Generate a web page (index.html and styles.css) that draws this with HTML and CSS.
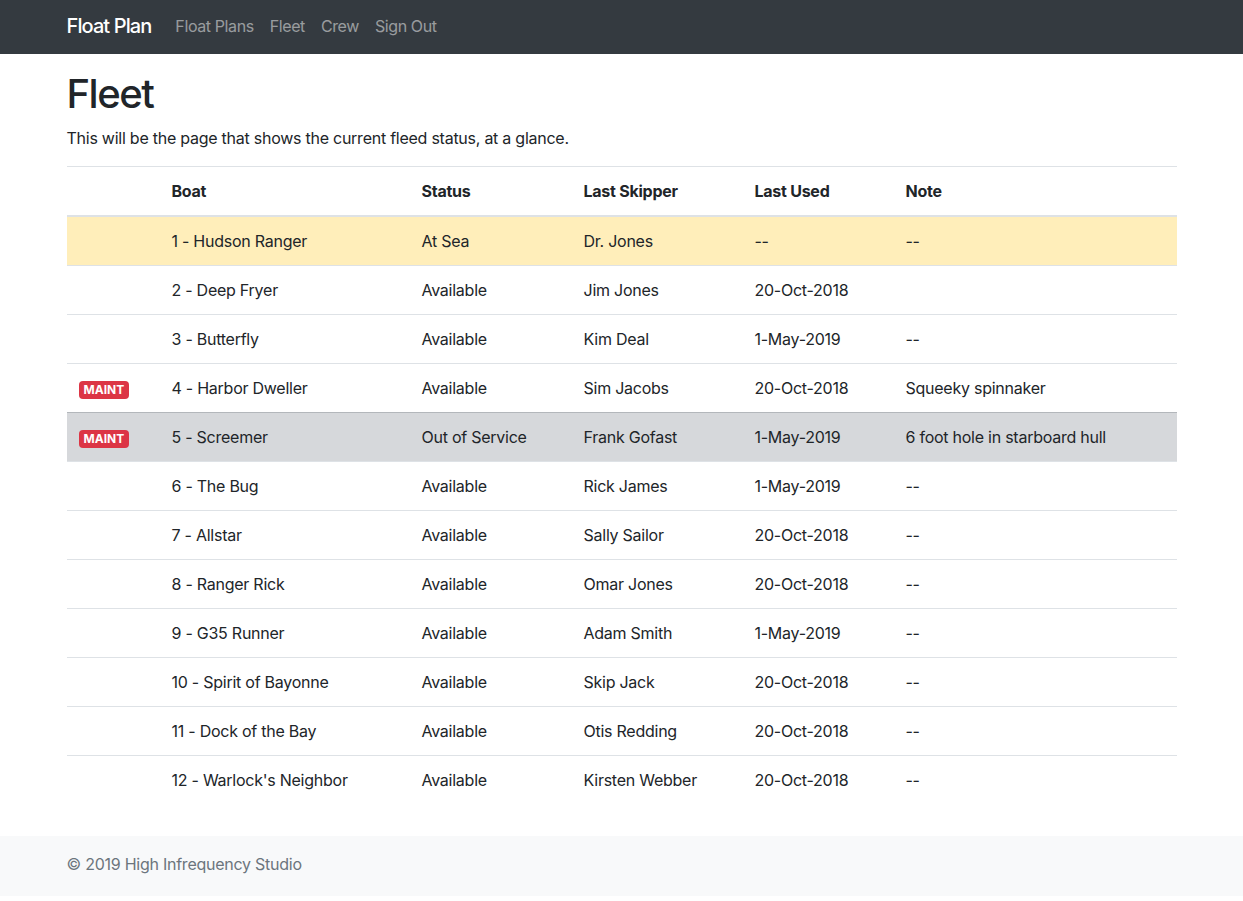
FILE: index.html
```html
<!DOCTYPE html>
<html lang="en">
<head>
<meta charset="utf-8">
<title>Float Plan - Fleet</title>
<link rel="stylesheet" href="styles.css">
</head>
<body>
<nav class="navbar">
  <div class="container nav-inner">
    <a class="brand" href="#">Float Plan</a>
    <ul class="nav-links">
      <li><a href="#">Float Plans</a></li>
      <li><a href="#">Fleet</a></li>
      <li><a href="#">Crew</a></li>
      <li><a href="#">Sign Out</a></li>
    </ul>
  </div>
</nav>
<main class="container main">
  <h1>Fleet</h1>
  <p class="lead-text">This will be the page that shows the current fleed status, at a glance.</p>
  <table class="fleet">
    <colgroup>
      <col class="c-badge"><col class="c-boat"><col class="c-status"><col class="c-skipper"><col class="c-used"><col class="c-note">
    </colgroup>
    <thead>
      <tr><th></th><th>Boat</th><th>Status</th><th>Last Skipper</th><th>Last Used</th><th>Note</th></tr>
    </thead>
    <tbody>
      <tr class="row-warning"><td></td><td>1 - Hudson Ranger</td><td>At Sea</td><td>Dr. Jones</td><td>--</td><td>--</td></tr>
      <tr><td></td><td>2 - Deep Fryer</td><td>Available</td><td>Jim Jones</td><td>20-Oct-2018</td><td></td></tr>
      <tr><td></td><td>3 - Butterfly</td><td>Available</td><td>Kim Deal</td><td>1-May-2019</td><td>--</td></tr>
      <tr><td><span class="badge">MAINT</span></td><td>4 - Harbor Dweller</td><td>Available</td><td>Sim Jacobs</td><td>20-Oct-2018</td><td>Squeeky spinnaker</td></tr>
      <tr class="row-secondary"><td><span class="badge">MAINT</span></td><td>5 - Screemer</td><td>Out of Service</td><td>Frank Gofast</td><td>1-May-2019</td><td>6 foot hole in starboard hull</td></tr>
      <tr><td></td><td>6 - The Bug</td><td>Available</td><td>Rick James</td><td>1-May-2019</td><td>--</td></tr>
      <tr><td></td><td>7 - Allstar</td><td>Available</td><td>Sally Sailor</td><td>20-Oct-2018</td><td>--</td></tr>
      <tr><td></td><td>8 - Ranger Rick</td><td>Available</td><td>Omar Jones</td><td>20-Oct-2018</td><td>--</td></tr>
      <tr><td></td><td>9 - G35 Runner</td><td>Available</td><td>Adam Smith</td><td>1-May-2019</td><td>--</td></tr>
      <tr><td></td><td>10 - Spirit of Bayonne</td><td>Available</td><td>Skip Jack</td><td>20-Oct-2018</td><td>--</td></tr>
      <tr><td></td><td>11 - Dock of the Bay</td><td>Available</td><td>Otis Redding</td><td>20-Oct-2018</td><td>--</td></tr>
      <tr><td></td><td>12 - Warlock's Neighbor</td><td>Available</td><td>Kirsten Webber</td><td>20-Oct-2018</td><td>--</td></tr>
    </tbody>
  </table>
</main>
<footer class="footer">
  <div class="container">
    <span class="muted">© 2019 High Infrequency Studio</span>
  </div>
</footer>
</body>
</html>
```
FILE: styles.css
```css
* { box-sizing: border-box; }
html, body { margin: 0; padding: 0; }
body {
  font-family: "Inter", "Liberation Sans", Arial, sans-serif;
  font-size: 16px;
  line-height: 1.5;
  letter-spacing: -0.25px;
  color: #212529;
  background: #fff;
}
a { text-decoration: none; }
.container {
  width: 100%;
  max-width: 1140px;
  padding: 0 15px;
  margin: 0 auto;
}
.navbar {
  background: #343a40;
  padding: 7px 16px;
}
.nav-inner {
  display: flex;
  align-items: center;
}
.brand {
  color: #fff;
  font-size: 20px;
  line-height: 30px;
  padding: 4px 0 6px;
  margin-right: 16px;
  font-weight: 500;
  letter-spacing: -0.9px;
}
.nav-links {
  list-style: none;
  display: flex;
  margin: 0;
  padding: 0;
}
.nav-links a {
  display: block;
  padding: 7px 8px 9px;
  color: rgba(255,255,255,.5);
  line-height: 24px;
  letter-spacing: -0.4px;
}
.main { padding-top: 16px; padding-bottom: 16px; }
h1 {
  font-size: 40px;
  font-weight: 500;
  line-height: 1.2;
  letter-spacing: -1.5px;
  margin: 0 0 8px;
}
.lead-text { margin: 0 0 16px; }
.fleet {
  width: 100%;
  border-collapse: collapse;
  margin-bottom: 16px;
  table-layout: fixed;
}
.c-badge { width: 93px; }
.c-boat { width: 250px; }
.c-status { width: 162px; }
.c-skipper { width: 171px; }
.c-used { width: 151px; }
.c-note { width: 283px; }
.fleet th, .fleet td {
  padding: 12px;
  border-top: 1px solid #dee2e6;
  text-align: left;
  vertical-align: top;
  white-space: nowrap;
}
.fleet th { font-weight: 700; }
.fleet thead th {
  border-bottom: 2px solid #dee2e6;
  vertical-align: bottom;
}
.row-warning td { background: #ffeeba; border-color: #ffdf7e; }
.row-secondary td { background: #d6d8db; border-color: #b3b7bb; }
.badge {
  display: inline-block;
  padding: 3px 5px;
  font-size: 12px;
  font-weight: 700;
  line-height: 1;
  letter-spacing: 0;
  color: #fff;
  background: #dc3545;
  border-radius: 4px;
  vertical-align: 0;
}
.footer {
  background: #f8f9fa;
  padding: 16px 0 20px;
}
.muted { color: #6c757d; }
```
